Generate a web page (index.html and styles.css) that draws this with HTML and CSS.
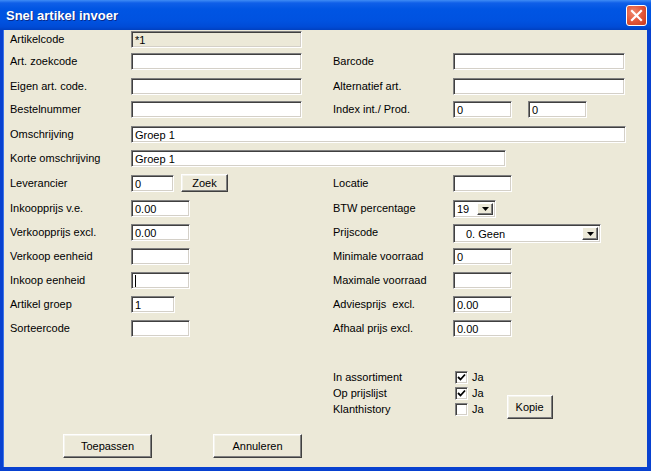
FILE: index.html
```html
<!DOCTYPE html>
<html>
<head>
<meta charset="utf-8">
<link rel="stylesheet" href="styles.css">
</head>
<body>
<div class="window">
  <div class="titlebar">
    <span class="title">Snel artikel invoer</span>
    <span class="close"><svg width="13" height="13" viewBox="0 0 13 13"><path d="M2 2 L11 11 M11 2 L2 11" stroke="#fff" stroke-width="2.2" stroke-linecap="square"/></svg></span>
  </div>
  <div class="client">
    <div class="form">
      <div class="lbl">Artikelcode</div>
      <div class="cell span3"><div class="field disabled w171">*1</div></div>

      <div class="lbl">Art. zoekcode</div>
      <div class="cell"><div class="field w171"></div></div>
      <div class="lbl">Barcode</div>
      <div class="cell"><div class="field w172"></div></div>

      <div class="lbl">Eigen art. code.</div>
      <div class="cell"><div class="field w171"></div></div>
      <div class="lbl">Alternatief art.</div>
      <div class="cell"><div class="field w172"></div></div>

      <div class="lbl">Bestelnummer</div>
      <div class="cell"><div class="field w171"></div></div>
      <div class="lbl">Index int./ Prod.</div>
      <div class="cell pair"><div class="field w59">0</div><div class="field w59">0</div></div>

      <div class="lbl">Omschrijving</div>
      <div class="cell span3"><div class="field w495">Groep 1</div></div>

      <div class="lbl">Korte omschrijving</div>
      <div class="cell span3"><div class="field w375">Groep 1</div></div>

      <div class="lbl">Leverancier</div>
      <div class="cell zoek"><div class="field w43">0</div><div class="btn btn-zoek">Zoek</div></div>
      <div class="lbl">Locatie</div>
      <div class="cell"><div class="field w59"></div></div>

      <div class="lbl">Inkoopprijs v.e.</div>
      <div class="cell"><div class="field w59">0.00</div></div>
      <div class="lbl">BTW percentage</div>
      <div class="cell"><div class="select w43"><span class="sel-text">19</span><span class="arrow"><svg width="7" height="4" viewBox="0 0 7 4"><path d="M0 0H7L3.5 4Z" fill="#000"/></svg></span></div></div>

      <div class="lbl">Verkoopprijs excl.</div>
      <div class="cell"><div class="field w59">0.00</div></div>
      <div class="lbl">Prijscode</div>
      <div class="cell"><div class="select w148 tall"><span class="sel-text ind">0. Geen</span><span class="arrow"><svg width="7" height="4" viewBox="0 0 7 4"><path d="M0 0H7L3.5 4Z" fill="#000"/></svg></span></div></div>

      <div class="lbl">Verkoop eenheid</div>
      <div class="cell"><div class="field w59"></div></div>
      <div class="lbl">Minimale voorraad</div>
      <div class="cell"><div class="field w59">0</div></div>

      <div class="lbl">Inkoop eenheid</div>
      <div class="cell"><div class="field w59"><span class="caret"></span></div></div>
      <div class="lbl">Maximale voorraad</div>
      <div class="cell"><div class="field w59"></div></div>

      <div class="lbl">Artikel groep</div>
      <div class="cell"><div class="field w44">1</div></div>
      <div class="lbl">Adviesprijs&nbsp; excl.</div>
      <div class="cell"><div class="field w59">0.00</div></div>

      <div class="lbl">Sorteercode</div>
      <div class="cell"><div class="field w59"></div></div>
      <div class="lbl">Afhaal prijs excl.</div>
      <div class="cell"><div class="field w59">0.00</div></div>
    </div>

    <div class="checks">
      <div class="checklist">
        <div class="crow"><span class="clbl">In assortiment</span><span class="cbox"><svg width="9" height="9" viewBox="0 0 9 9"><path d="M1 4 L3.5 6.5 L8 1.5" stroke="#000" stroke-width="1.8" fill="none"/></svg></span><span class="ja">Ja</span></div>
        <div class="crow"><span class="clbl">Op prijslijst</span><span class="cbox"><svg width="9" height="9" viewBox="0 0 9 9"><path d="M1 4 L3.5 6.5 L8 1.5" stroke="#000" stroke-width="1.8" fill="none"/></svg></span><span class="ja">Ja</span></div>
        <div class="crow"><span class="clbl">Klanthistory</span><span class="cbox"></span><span class="ja">Ja</span></div>
      </div>
      <div class="btn btn-kopie">Kopie</div>
    </div>

    <div class="actions">
      <div class="btn btn-big">Toepassen</div>
      <div class="btn btn-big">Annuleren</div>
    </div>
  </div>
</div>
</body>
</html>
```
FILE: styles.css
```css
* { box-sizing: border-box; }
html, body { margin: 0; padding: 0; background: #ECE9D8; }
body {
  font-family: "Liberation Sans", Arial, sans-serif;
  font-size: 11px;
  color: #000;
}
.window {
  width: 651px;
  height: 471px;
  display: flex;
  flex-direction: column;
  background: #0841D0;
}
.titlebar {
  height: 30px;
  flex: none;
  display: flex;
  align-items: center;
  justify-content: space-between;
  padding: 0 4px 0 6px;
  background: linear-gradient(to bottom, #3F8CF5 0%, #0F5FE8 10%, #0055E3 30%, #0052E0 70%, #004BD6 90%, #0040C0 100%);
}
.title {
  color: #fff;
  font-family: "Liberation Sans", Arial, sans-serif;
  font-weight: bold;
  font-size: 13px;
  text-shadow: 1px 1px 0 #0A2A8A;
}
.close {
  width: 21px;
  height: 21px;
  border: 1px solid #fff;
  border-radius: 3px;
  background: radial-gradient(circle at 35% 35%, #F08A6C 0%, #E2573A 50%, #C8381C 100%);
  display: flex;
  align-items: center;
  justify-content: center;
}
.client {
  flex: 1;
  margin: 0 4px 4px 3px;
  background: #ECE9D8;
  border-left: 1px solid #3B73E8;
  padding: 1px 0 0 6px;
  display: flex;
  flex-direction: column;
}
.form {
  display: grid;
  grid-template-columns: 121px 202px 120px 1fr;
  grid-template-rows: 22px 25px 23px 25px 24px 25px 25px 24px 24px 24px 24px 24px 17px;
}
.lbl {
  height: 17px;
  line-height: 16px;
  white-space: nowrap;
}
.cell { display: flex; align-items: flex-start; }
.span3 { grid-column: 2 / 5; }
.pair { gap: 16px; }
.zoek { gap: 7px; margin-top: -1px; }
.zoek .field { margin-top: 1px; }
.field {
  height: 17px;
  background: #fff;
  border: 1px solid;
  border-color: #7F7F7F #FFFFFF #FFFFFF #7F7F7F;
  box-shadow: inset 1px 1px 0 #404040, inset -1px -1px 0 #D4D0C8;
  padding: 0 0 0 3px;
  line-height: 16px;
  white-space: nowrap;
  overflow: hidden;
}
.field.disabled { background: #ECE9D8; }
.w171 { width: 171px; }
.w172 { width: 172px; }
.w59 { width: 59px; }
.w43 { width: 43px; }
.w44 { width: 44px; }
.w495 { width: 495px; }
.w375 { width: 375px; }
.w148 { width: 148px; }
.caret {
  display: inline-block;
  width: 1px;
  height: 12px;
  background: #000;
  vertical-align: -2px;
}
.select {
  height: 18px;
  background: #fff;
  border: 1px solid;
  border-color: #7F7F7F #FFFFFF #FFFFFF #7F7F7F;
  box-shadow: inset 1px 1px 0 #404040, inset -1px -1px 0 #D4D0C8;
  display: flex;
  align-items: center;
  justify-content: space-between;
  padding: 2px 2px 2px 3px;
}
.select.tall { height: 19px; }
.sel-text { line-height: 14px; }
.sel-text.ind { padding-left: 9px; }
.arrow {
  width: 16px;
  height: 100%;
  background: #ECE9D8;
  border: 1px solid;
  border-color: #FFFFFF #404040 #404040 #FFFFFF;
  box-shadow: inset -1px -1px 0 #808080;
  display: flex;
  align-items: center;
  justify-content: center;
}
.btn {
  background: #ECE9D8;
  border: 1px solid;
  border-color: #FFFFFF #404040 #404040 #FFFFFF;
  box-shadow: inset -1px -1px 0 #808080, inset 1px 1px 0 #F4F3EC;
  display: flex;
  align-items: center;
  justify-content: center;
  white-space: nowrap;
}
.btn-zoek { width: 47px; height: 18px; }
.checks {
  display: flex;
  align-items: flex-start;
  margin: 32px 0 0 323px;
}
.checklist { display: flex; flex-direction: column; }
.crow {
  display: flex;
  align-items: center;
  height: 16px;
}
.clbl { width: 122px; line-height: 16px; }
.cbox {
  width: 13px;
  height: 13px;
  background: #fff;
  border: 1px solid;
  border-color: #7F7F7F #FFFFFF #FFFFFF #7F7F7F;
  box-shadow: inset 1px 1px 0 #404040, inset -1px -1px 0 #D4D0C8;
  display: flex;
  align-items: center;
  justify-content: center;
}
.ja { margin-left: 4px; }
.btn-kopie {
  width: 46px;
  height: 24px;
  margin: 26px 0 0 23px;
}
.actions {
  display: flex;
  gap: 61px;
  margin: 15px 0 0 53px;
}
.btn-big { width: 89px; height: 24px; }
```
